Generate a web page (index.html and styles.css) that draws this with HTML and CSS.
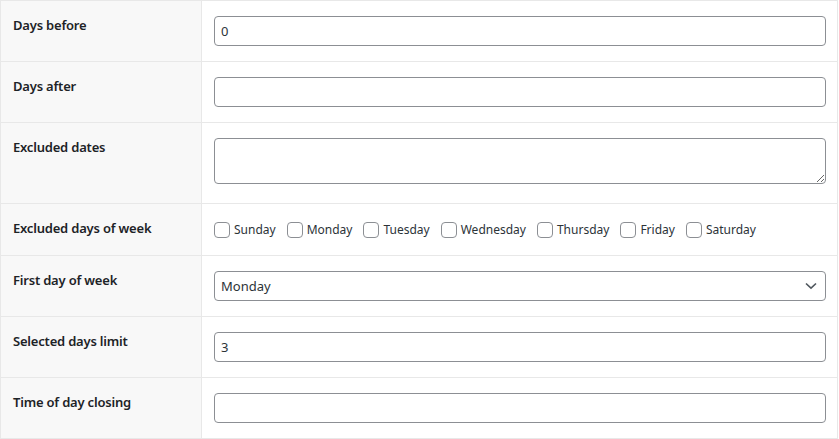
FILE: index.html
```html
<!DOCTYPE html>
<html>
<head>
<meta charset="utf-8">
<link rel="stylesheet" href="styles.css">
</head>
<body>
<div class="form-table">
  <div class="row">
    <div class="th">Days before</div>
    <div class="td"><input class="text" type="text" value="0"></div>
  </div>
  <div class="row">
    <div class="th">Days after</div>
    <div class="td"><input class="text" type="text" value=""></div>
  </div>
  <div class="row">
    <div class="th">Excluded dates</div>
    <div class="td td-area"><textarea class="area"></textarea></div>
  </div>
  <div class="row">
    <div class="th">Excluded days of week</div>
    <div class="td td-checks">
      <label class="check"><input type="checkbox"><span>Sunday</span></label>
      <label class="check"><input type="checkbox"><span>Monday</span></label>
      <label class="check"><input type="checkbox"><span>Tuesday</span></label>
      <label class="check"><input type="checkbox"><span>Wednesday</span></label>
      <label class="check"><input type="checkbox"><span>Thursday</span></label>
      <label class="check"><input type="checkbox"><span>Friday</span></label>
      <label class="check"><input type="checkbox"><span>Saturday</span></label>
    </div>
  </div>
  <div class="row">
    <div class="th">First day of week</div>
    <div class="td">
      <div class="select-wrap">
        <select class="select"><option>Monday</option></select>
        <svg class="chev" width="12" height="8" viewBox="0 0 12 8"><path d="M1 1.5 L6 6.2 L11 1.5" fill="none" stroke="#50575e" stroke-width="1.6"/></svg>
      </div>
    </div>
  </div>
  <div class="row">
    <div class="th">Selected days limit</div>
    <div class="td"><input class="text" type="text" value="3"></div>
  </div>
  <div class="row">
    <div class="th">Time of day closing</div>
    <div class="td"><input class="text" type="text" value=""></div>
  </div>
</div>
</body>
</html>
```

FILE: styles.css
```css
* { box-sizing: border-box; }
html, body { margin: 0; padding: 0; background: #fff; }
body {
  font-family: "Noto Sans", "Open Sans", sans-serif;
  font-size: 14px;
  color: #2c3338;
}
.form-table {
  width: 838px;
  border: 1px solid #e8e8e8;
  border-bottom: none;
}
.row {
  display: flex;
  border-bottom: 1px solid #e8e8e8;
}
.th {
  width: 201px;
  flex: none;
  background: #f8f8f8;
  border-right: 1px solid #e8e8e8;
  padding: 14px 10px 10px 12px;
  font-weight: 600;
  font-size: 13px;
  letter-spacing: -0.2px;
  line-height: 20px;
  color: #1d2327;
}
.td {
  flex: 1;
  padding: 15px 11px 15px 12px;
}
.text, .select, .area {
  display: block;
  width: 100%;
  height: 30px;
  margin: 0;
  border: 1px solid #8c8f94;
  border-radius: 4px;
  background: #fff;
  font-family: inherit;
  font-size: 13px;
  color: #2c3338;
  padding: 0 6px;
  outline: none;
}
.td-area { padding-bottom: 19px; }
.area { height: 46px; padding: 2px 6px; resize: vertical; }
.td-checks {
  display: flex;
  align-items: center;
  gap: 0 11px;
  padding: 17px 12px 17px 12px;
  height: 51px;
}
.check {
  display: flex;
  align-items: center;
  gap: 4px;
  font-size: 12px;
  line-height: 16px;
  color: #2c3338;
}
.check input {
  appearance: none;
  -webkit-appearance: none;
  width: 16px;
  height: 16px;
  margin: 0;
  border: 1px solid #8c8f94;
  border-radius: 4px;
  background: #fff;
}
.select-wrap { position: relative; }
.select {
  appearance: none;
  -webkit-appearance: none;
  padding: 0 24px 0 6px;
}
.chev { position: absolute; right: 9px; top: 11px; }
```
